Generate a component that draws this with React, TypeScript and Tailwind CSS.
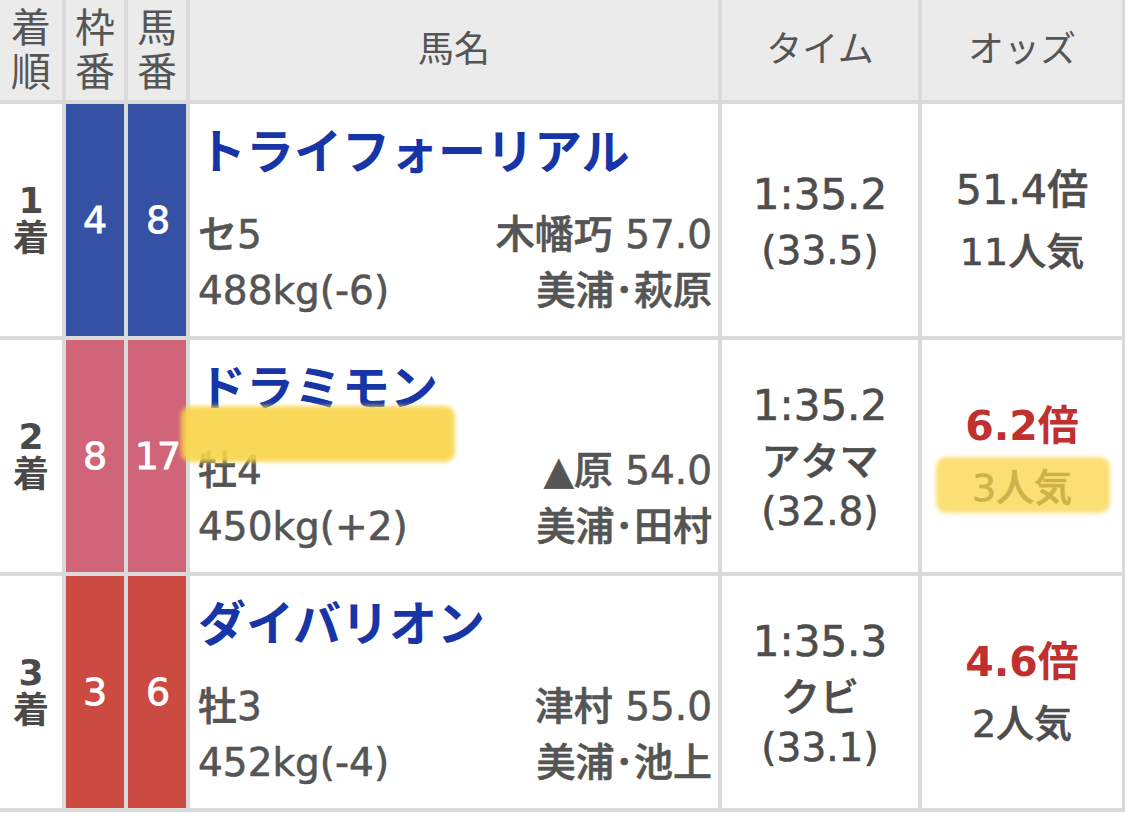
import React from "react";

type Row = {
  rank: string;
  waku: string;
  uma: string;
  wakuColor: string;
  name: string;
  sexAge: string;
  jockey: string;
  weight: string;
  stable: string;
  time: string[];
  odds: string;
  pop: string;
  hot: boolean;
};

const rows: Row[] = [
  {
    rank: "1",
    waku: "4",
    uma: "8",
    wakuColor: "bg-[#3551a3]",
    name: "トライフォーリアル",
    sexAge: "セ5",
    jockey: "木幡巧 57.0",
    weight: "488kg(-6)",
    stable: "美浦･萩原",
    time: ["1:35.2", "(33.5)"],
    odds: "51.4倍",
    pop: "11人気",
    hot: false,
  },
  {
    rank: "2",
    waku: "8",
    uma: "17",
    wakuColor: "bg-[#d06479]",
    name: "ドラミモン",
    sexAge: "牡4",
    jockey: "▲原 54.0",
    weight: "450kg(+2)",
    stable: "美浦･田村",
    time: ["1:35.2", "アタマ", "(32.8)"],
    odds: "6.2倍",
    pop: "3人気",
    hot: true,
  },
  {
    rank: "3",
    waku: "3",
    uma: "6",
    wakuColor: "bg-[#cb4a42]",
    name: "ダイバリオン",
    sexAge: "牡3",
    jockey: "津村 55.0",
    weight: "452kg(-4)",
    stable: "美浦･池上",
    time: ["1:35.3", "クビ", "(33.1)"],
    odds: "4.6倍",
    pop: "2人気",
    hot: true,
  },
];

const font = { fontFamily: '"DejaVu Sans", "Noto Sans CJK JP", sans-serif' };

export default function App() {
  return (
    <div className="w-[1125px] h-[813px] bg-white relative" style={font}>
      <div className="grid grid-cols-[62px_58px_58px_528px_196px_200px] grid-rows-[100px_232px_232px_232px] gap-[4px] bg-[#dadada] pr-[3px] pb-[4px] text-[#555]">
        {/* header */}
        <div className="bg-[#ebebeb] flex flex-col items-center justify-center text-[40px] leading-[44px]">
          <span>着</span>
          <span>順</span>
        </div>
        <div className="bg-[#ebebeb] flex flex-col items-center justify-center text-[40px] leading-[44px]">
          <span>枠</span>
          <span>番</span>
        </div>
        <div className="bg-[#ebebeb] flex flex-col items-center justify-center text-[40px] leading-[44px]">
          <span>馬</span>
          <span>番</span>
        </div>
        <div className="bg-[#ebebeb] flex items-center justify-center text-[36px]">馬名</div>
        <div className="bg-[#ebebeb] flex items-center justify-center text-[36px]">タイム</div>
        <div className="bg-[#ebebeb] flex items-center justify-center text-[36px]">オッズ</div>

        {rows.map((r) => (
          <React.Fragment key={r.rank}>
            <div className="bg-white flex flex-col items-center justify-center text-[36px] leading-[38px] font-bold text-[#4a4a4a]">
              <span>{r.rank}</span>
              <span>着</span>
            </div>
            <div className={`${r.wakuColor} flex items-center justify-center text-white text-[38px] [-webkit-text-stroke:0.8px_white]`}>
              {r.waku}
            </div>
            <div className={`${r.wakuColor} flex items-center justify-center text-white text-[38px] tracking-[-2px] [-webkit-text-stroke:0.8px_white]`}>
              {r.uma}
            </div>
            <div className="bg-white flex flex-col justify-between pl-[8px] pr-[6px] pt-[20px] pb-[17px]">
              <div className="text-[#1735a7] text-[48px] leading-[56px] font-bold">{r.name}</div>
              <div className="text-[39px] leading-[56px] font-medium [-webkit-text-stroke:0.6px_#555]">
                <div className="flex justify-between">
                  <span>{r.sexAge}</span>
                  <span>{r.jockey}</span>
                </div>
                <div className="flex justify-between">
                  <span>{r.weight}</span>
                  <span>{r.stable}</span>
                </div>
              </div>
            </div>
            <div className="bg-white flex flex-col items-center justify-center text-[#4d4d4d] font-medium [-webkit-text-stroke:0.6px_#4d4d4d]">
              <span className="text-[42px] leading-[62px]">{r.time[0]}</span>
              {r.time.slice(1).map((t) => (
                <span key={t} className="text-[39px] leading-[50px]">
                  {t}
                </span>
              ))}
            </div>
            <div className="bg-white flex flex-col items-center justify-center font-medium">
              <span
                className={`text-[41px] leading-[64px] ${
                  r.hot ? "text-[#c0302f] font-bold" : "text-[#4d4d4d] [-webkit-text-stroke:0.6px_#4d4d4d]"
                }`}
              >
                {r.odds}
              </span>
              <span className="text-[38px] leading-[60px] text-[#4d4d4d] [-webkit-text-stroke:0.6px_#4d4d4d]">{r.pop}</span>
            </div>
          </React.Fragment>
        ))}
      </div>

      {/* marker highlights */}
      <div className="absolute left-[181px] top-[406px] w-[274px] h-[56px] rounded-[10px] bg-[#f8d447]/90 blur-[2px]" />
      <div className="absolute left-[936px] top-[457px] w-[174px] h-[56px] rounded-[10px] bg-[#f8d447]/75 blur-[2px]" />
    </div>
  );
}
